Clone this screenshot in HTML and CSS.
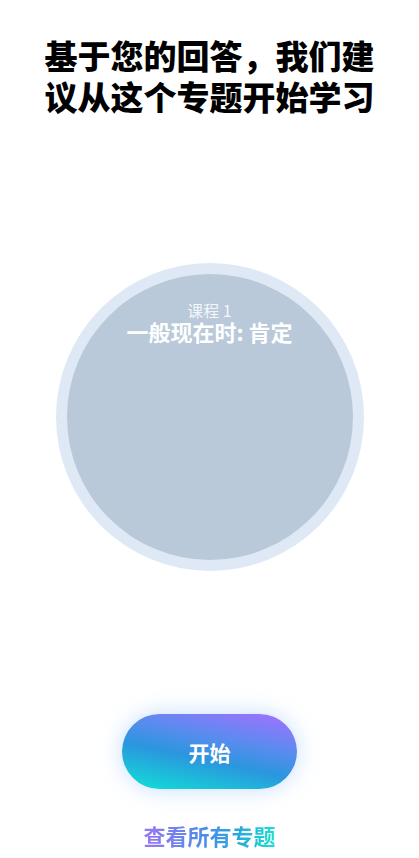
FILE: index.html
```html
<!DOCTYPE html>
<html lang="zh">
<head>
<meta charset="utf-8">
<link rel="stylesheet" href="styles.css">
</head>
<body>
<div class="page">
  <h1 class="title">基于您的回答，我们建议从这个专题开始学习</h1>
  <div class="ring">
    <div class="disc">
      <div class="lesson">课程 1</div>
      <div class="topic">一般现在时: 肯定</div>
    </div>
  </div>
  <button class="start">开始</button>
  <a class="all">查看所有专题</a>
</div>
</body>
</html>
```
FILE: styles.css
```css
html, body {
  margin: 0;
  padding: 0;
  background: #ffffff;
}
body {
  font-family: "Noto Sans CJK SC", "Noto Sans", sans-serif;
  width: 419px;
  height: 858px;
  overflow: hidden;
}
.page {
  display: flex;
  flex-direction: column;
  align-items: center;
}
.title {
  margin: 35px 0 0;
  width: 335px;
  font-size: 33px;
  line-height: 41px;
  font-weight: 900;
  color: #000;
  text-align: center;
}
.ring {
  margin-top: 146px;
  width: 308px;
  height: 308px;
  border-radius: 50%;
  background: #dfe9f5;
  display: flex;
  align-items: center;
  justify-content: center;
}
.disc {
  width: 286px;
  height: 286px;
  border-radius: 50%;
  background: #b9c9da;
  display: flex;
  flex-direction: column;
  align-items: center;
  box-sizing: border-box;
  padding-top: 27px;
}
.lesson {
  font-size: 16px;
  line-height: 18px;
  color: rgba(255,255,255,0.85);
}
.topic {
  margin-top: 0;
  font-size: 22px;
  line-height: 24px;
  font-weight: 700;
  color: #ffffff;
}
.start {
  margin-top: 143px;
  width: 175px;
  height: 75px;
  border: none;
  border-radius: 38px;
  background: linear-gradient(192deg, #a66fff 0%, #5b8bef 35%, #2b96de 58%, #0fe2d6 100%);
  box-shadow: 0 0 22px rgba(90, 160, 255, 0.35);
  color: #fff;
  font-family: "Noto Sans CJK SC", "Noto Sans", sans-serif;
  font-size: 21px;
  font-weight: 700;
  padding: 0;
}
.all {
  margin-top: 32px;
  font-size: 22px;
  line-height: 28px;
  font-weight: 700;
  background: linear-gradient(90deg, #9c76f4 0%, #4f8ce8 45%, #2aa6dc 70%, #18e2d2 100%);
  -webkit-background-clip: text;
  background-clip: text;
  color: transparent;
}
```
